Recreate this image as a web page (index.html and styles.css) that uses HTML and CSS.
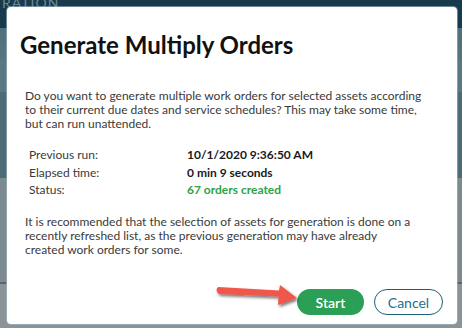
FILE: index.html
```html
<!DOCTYPE html>
<html lang="en">
<head>
    <meta charset="UTF-8">
    <meta name="viewport" content="width=device-width, initial-scale=1.0">
    <title>Generate Multiply Orders</title>
    <link rel="stylesheet" href="styles.css">
</head>
<body>
    <div class="backdrop">
        <div class="backdrop-title">RATION</div>
        <div class="dialog">
            <h1 class="dialog-title">Generate Multiply Orders</h1>
            <div class="dialog-body">
                <p>Do you want to generate multiple work orders for selected assets according to their current due dates and service schedules? This may take some time, but can run unattended.</p>
                <div class="run-info">
                    <div class="label">Previous run:</div>
                    <div class="value">10/1/2020 9:36:50 AM</div>
                    <div class="label">Elapsed time:</div>
                    <div class="value">0 min 9 seconds</div>
                    <div class="label">Status:</div>
                    <div class="value success">67 orders created</div>
                </div>
                <p class="note">It is recommended that the selection of assets for generation is done on a recently refreshed list, as the previous generation may have already created work orders for some.</p>
            </div>
            <div class="dialog-footer">
                <button class="btn btn-primary">Start</button>
                <button class="btn btn-outline">Cancel</button>
            </div>

            <!-- annotation arrow -->
            <svg class="arrow" width="95" height="35" viewBox="0 0 95 35">
                <defs>
                    <filter id="shadow" x="-20%" y="-40%" width="140%" height="180%">
                        <feDropShadow dx="1.5" dy="2" stdDeviation="1.5" flood-color="#000" flood-opacity="0.55"/>
                    </filter>
                </defs>
                <path d="M8,9 L69,12.5 L70,7 L87,20 L68,27 L68.5,18.5 L9,16 Q4.5,12.5 8,9 Z" fill="#f0574a" filter="url(#shadow)"/>
            </svg>
        </div>
    </div>
</body>
</html>
```

FILE: styles.css
```css
body {
    margin: 0;
    font-family: "Lato", "Open Sans", sans-serif;
}

.backdrop {
    position: relative;
    height: 328px;
    padding: 7px;
    box-sizing: border-box;
    overflow: hidden;
    background: linear-gradient(to bottom,
        #173b4d 0, #173b4d 28px,
        #4f6f7c 28px, #56757f 60px,
        #587883 60px, #587883 92px,
        #4c6b78 92px, #4c6b78 178px,
        #7d8b91 178px, #7d8b91 282px,
        #5a666c 282px, #5a666c 284px,
        #8a9498 284px, #8a9498 328px);
}

.backdrop-title {
    position: absolute;
    top: -5px;
    left: 2px;
    font-size: 14px;
    line-height: 16px;
    letter-spacing: 1px;
    color: #6d8793;
}

.dialog {
    position: relative;
    display: flex;
    flex-direction: column;
    width: 450px;
    height: 317px;
    box-sizing: border-box;
    background-color: #fff;
    border-radius: 4px;
    box-shadow: 0 0 0 1px rgba(160, 185, 200, 0.6);
}

.dialog-title {
    margin: 0;
    padding: 23px 13px 0;
    font-size: 24px;
    line-height: 30px;
    font-weight: 700;
    color: #111;
}

.dialog-body {
    padding: 29px 26px 0 18px;
    font-size: 12px;
    line-height: 14px;
    color: #3a3a3a;
}

.dialog-body p {
    margin: 0;
}

.dialog-body .note {
    max-width: 390px;
}

.run-info {
    display: grid;
    grid-template-columns: 158px 1fr;
    row-gap: 3.5px;
    margin: 17px 0 18px 4px;
}

.run-info .value {
    font-weight: 700;
    color: #1a1a1a;
}

.run-info .value.success {
    color: #2ca347;
}

.dialog-footer {
    display: flex;
    justify-content: flex-end;
    gap: 10px;
    margin-top: auto;
    padding: 0 14px 9px;
}

.btn {
    height: 26px;
    border-radius: 13px;
    font-family: inherit;
    font-size: 14px;
    cursor: pointer;
    box-sizing: border-box;
}

.btn-primary {
    width: 67px;
    border: none;
    background-color: #2b9f55;
    color: #fff;
    font-weight: 600;
}

.btn-outline {
    width: 69px;
    border: 1.5px solid #1f5f78;
    background-color: #fff;
    color: #24708c;
}

.arrow {
    position: absolute;
    left: 203px;
    top: 271px;
}
```
